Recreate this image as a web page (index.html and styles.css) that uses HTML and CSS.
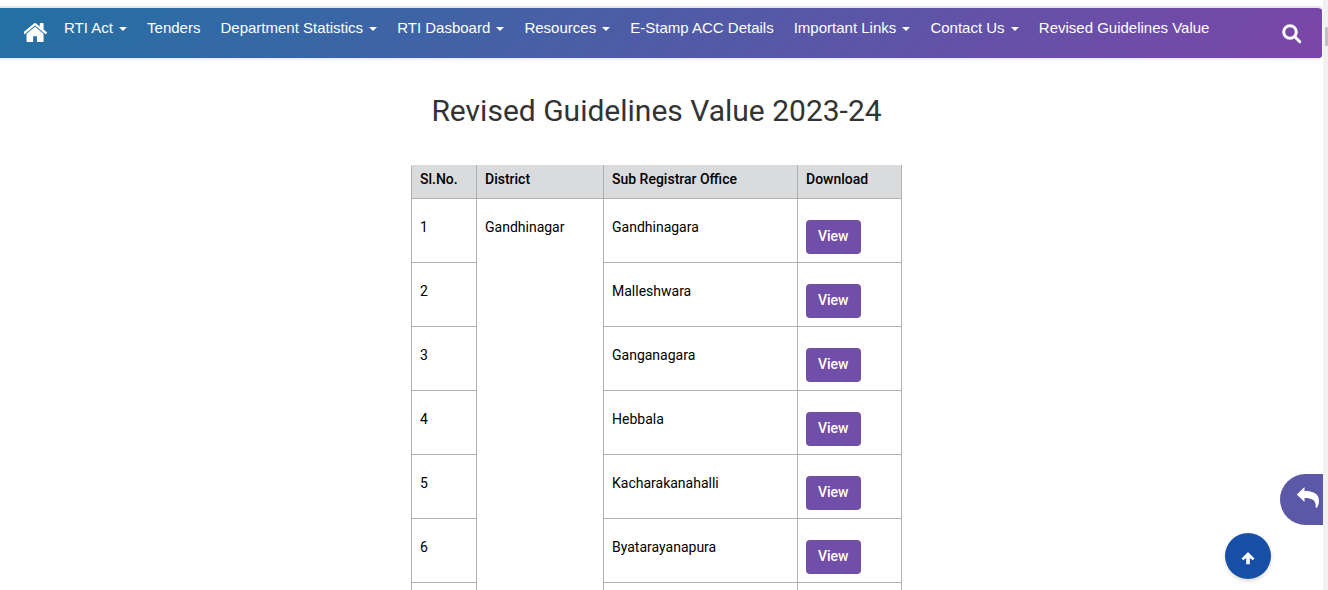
FILE: index.html
```html
<!DOCTYPE html>
<html lang="en">
<head>
    <meta charset="UTF-8">
    <meta name="viewport" content="width=device-width, initial-scale=1.0">
    <title>Revised Guidelines Value</title>
    <link rel="stylesheet" href="styles.css">
</head>
<body>
    <div class="page">
        <nav class="navbar">
            <a href="#" class="nav-home" aria-label="Home">
                <svg viewBox="89 253 1614 1283" width="24" height="19"><path d="M1408 992v480q0 26-19 45t-45 19h-384v-384h-256v384h-384q-26 0-45-19t-19-45v-480q0-1 .5-3t.5-3l575-474 575 474q1 2 1 6zm223-69l-62 74q-8 9-21 11h-3q-13 0-21-7l-692-577-692 577q-12 8-24 7-13-2-21-11l-62-74q-8-10-7-23.5t11-21.5l719-599q32-26 76-26t76 26l244 204v-195q0-14 9-23t23-9h192q14 0 23 9t9 23v408l219 182q10 8 11 21.5t-7 23.5z"/></svg>
            </a>
            <ul class="nav-list">
                <li><a href="#">RTI Act <span class="caret"></span></a></li>
                <li><a href="#">Tenders</a></li>
                <li><a href="#">Department Statistics <span class="caret"></span></a></li>
                <li><a href="#">RTI Dasboard <span class="caret"></span></a></li>
                <li><a href="#">Resources <span class="caret"></span></a></li>
                <li><a href="#">E-Stamp ACC Details</a></li>
                <li><a href="#">Important Links <span class="caret"></span></a></li>
                <li><a href="#">Contact Us <span class="caret"></span></a></li>
                <li><a href="#">Revised Guidelines Value</a></li>
            </ul>
            <button type="button" class="nav-search" aria-label="Search">
                <svg viewBox="0 0 20 20" width="20" height="20"><circle cx="8" cy="8" r="6.300"/><path d="M12.800 12.800l5 5"/></svg>
            </button>
        </nav>

        <main class="content">
            <h1>Revised Guidelines Value 2023-24</h1>
            <table class="office-table">
                <colgroup>
                    <col class="col-no">
                    <col class="col-district">
                    <col class="col-office">
                    <col class="col-download">
                </colgroup>
                <thead>
                    <tr><th>Sl.No.</th><th>District</th><th>Sub Registrar Office</th><th>Download</th></tr>
                </thead>
                <tbody>
                    <tr><td>1</td><td rowspan="7">Gandhinagar</td><td>Gandhinagara</td><td><a href="#" class="btn-view">View</a></td></tr>
                    <tr><td>2</td><td>Malleshwara</td><td><a href="#" class="btn-view">View</a></td></tr>
                    <tr><td>3</td><td>Ganganagara</td><td><a href="#" class="btn-view">View</a></td></tr>
                    <tr><td>4</td><td>Hebbala</td><td><a href="#" class="btn-view">View</a></td></tr>
                    <tr><td>5</td><td>Kacharakanahalli</td><td><a href="#" class="btn-view">View</a></td></tr>
                    <tr><td>6</td><td>Byatarayanapura</td><td><a href="#" class="btn-view">View</a></td></tr>
                    <tr><td></td><td></td><td></td></tr>
                </tbody>
            </table>
        </main>
    </div>
    <div class="scroll-track"><div class="scroll-thumb"></div></div>

    <a href="#" class="back-tab" aria-label="Back">
        <svg viewBox="0 0 24 22" width="24" height="22"><path d="M.8 7.500L8.500 0v4C17 4 23 6.500 23 14c0 2.500-.8 5-2 6.500-.5.500-1.500.3-1.300-.6C20 13.500 16.500 11 8.500 11v4z"/></svg>
    </a>
    <a href="#" class="to-top" aria-label="Back to top">
        <svg viewBox="0 0 14 14" width="14" height="14"><path d="M7 1l6.500 6.500-1.800 1.800L8.800 7v6.300H5.200V7L2.300 9.300.5 7.500z"/></svg>
    </a>
</body>
</html>
```
FILE: styles.css
```css
:root {
    --nav-start: #2371a3;
    --nav-end: #7b46a9;
    --accent: #714fa8;
    --border: #b0b0b0;
    --track: #f1f1f1;
}

* {
    box-sizing: border-box;
}

body {
    margin: 0;
    height: 100vh;
    overflow: hidden;
    display: flex;
    font-family: Roboto, "Liberation Sans", sans-serif;
    font-size: 14px;
    color: #000;
    background: #fff;
}

.page {
    flex: 1;
    min-width: 0;
    padding-top: 6px;
}

/* Navigation */
.navbar {
    display: flex;
    align-items: flex-start;
    height: 54px;
    padding: 10px 20px 0 24px;
    margin-right: 1px;
    border-top: 2px solid #e4e6e8;
    border-bottom: 2px solid #efeff1;
    border-radius: 0 4px 4px 0;
    background: linear-gradient(135deg, var(--nav-start), var(--nav-end)) padding-box;
}

.navbar svg,
.back-tab svg,
.to-top svg {
    display: block;
    fill: #fff;
}

.nav-home {
    padding-top: 5px;
}

.nav-list {
    display: flex;
    flex: 1;
    gap: 20px;
    margin: 0;
    padding: 0 0 0 16px;
    list-style: none;
}

.nav-list a {
    color: #fff;
    font-family: "Liberation Sans", Arial, sans-serif;
    font-size: 15px;
    line-height: 20px;
    white-space: nowrap;
    text-decoration: none;
}

.caret {
    display: inline-block;
    margin-left: 2px;
    vertical-align: middle;
    border-top: 4px solid #fff;
    border-left: 4px solid transparent;
    border-right: 4px solid transparent;
}

.nav-search {
    padding: 6px 0 0;
    border: 0;
    background: none;
}

.nav-search svg {
    fill: none;
    stroke: #fff;
    stroke-width: 3px;
    stroke-linecap: round;
}

/* Guidelines table */
.content {
    padding: 32px 10px 0 0;
}

h1 {
    margin: 0 0 36px;
    color: #333;
    font-size: 30px;
    font-weight: 400;
    line-height: 37px;
    text-align: center;
}

.office-table {
    width: 491px;
    margin: 0 auto;
    border-collapse: collapse;
    table-layout: fixed;
}

.col-no {
    width: 65px;
}

.col-district {
    width: 127px;
}

.col-office {
    width: 194px;
}

.office-table th,
.office-table td {
    border: 1px solid var(--border);
    padding: 0 8px;
    line-height: 20px;
    text-align: left;
    vertical-align: top;
}

.office-table th {
    height: 33px;
    padding-top: 3px;
    border-top-color: #d9dbdd;
    background: #d9dbdd;
    font-weight: 500;
}

.office-table td {
    height: 64px;
    padding-top: 18px;
}

.btn-view {
    display: inline-block;
    margin-top: 3px;
    padding: 6px 12px 8px;
    border-radius: 4px;
    background: var(--accent);
    color: #fff;
    font-weight: 500;
    text-decoration: none;
}

/* Scroll strip */
.scroll-track {
    width: 5px;
    padding: 27px 0 0 2px;
    background: var(--track);
}

.scroll-thumb {
    height: 19px;
    background: #c1c1c1;
}

/* Floating buttons */
.back-tab {
    position: fixed;
    right: 5px;
    bottom: 65px;
    width: 43px;
    height: 51px;
    padding: 13px 0 0 16px;
    border-radius: 26px 0 0 26px;
    background: #5b58a7;
}

.to-top {
    position: fixed;
    right: 57px;
    bottom: 11px;
    display: flex;
    align-items: center;
    justify-content: center;
    width: 46px;
    height: 46px;
    padding-top: 4px;
    border-radius: 50%;
    background: #174ea6;
    box-shadow: 0 2px 4px rgba(0, 0, 0, 0.15);
}
```
